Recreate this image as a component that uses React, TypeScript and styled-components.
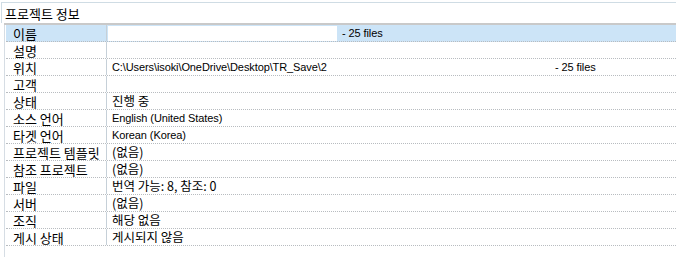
import styled, { createGlobalStyle } from "styled-components";

const GlobalStyle = createGlobalStyle`
  html, body {
    margin: 0;
    padding: 0;
    background: #ffffff;
  }
  body {
    font-family: "Liberation Sans", "Noto Sans CJK KR", sans-serif;
    font-size: 12px;
    color: #000;
  }
`;

type Row = {
  label: string;
  value?: string;
  extra?: string;
  extraAt?: number;
  editing?: boolean;
  latin?: boolean;
};

const rows: Row[] = [
  { label: "이름", extra: "- 25 files", editing: true },
  { label: "설명" },
  {
    label: "위치",
    value: "C:\\Users\\isoki\\OneDrive\\Desktop\\TR_Save\\2",
    extra: "- 25 files",
    extraAt: 448,
    latin: true,
  },
  { label: "고객" },
  { label: "상태", value: "진행 중" },
  { label: "소스 언어", value: "English (United States)", latin: true },
  { label: "타겟 언어", value: "Korean (Korea)", latin: true },
  { label: "프로젝트 템플릿", value: "(없음)" },
  { label: "참조 프로젝트", value: "(없음)" },
  { label: "파일", value: "번역 가능: 8, 참조: 0" },
  { label: "서버", value: "(없음)" },
  { label: "조직", value: "해당 없음" },
  { label: "게시 상태", value: "게시되지 않음" },
];

const Page = styled.div`
  width: 676px;
  height: 257px;
  overflow: hidden;
  display: flex;
  flex-direction: column;
`;

const Header = styled.div`
  height: 20px;
  margin-top: 2px;
  margin-left: 1px;
  border-top: 1px solid #cfdce4;
  border-left: 1px solid #cfdce4;
  padding-left: 3px;
  display: flex;
  align-items: center;
  font-family: "Noto Sans CJK KR", sans-serif;
  font-size: 13px;
  line-height: 1;
`;

const Divider = styled.div`
  height: 2px;
  margin-left: 4px;
  background: #c9c9c9;
`;

const Body = styled.div`
  flex: 1;
  margin-left: 4px;
  border-left: 1px solid #d6dde4;
  padding-left: 1px;
`;

const Grid = styled.div`
  display: flex;
  flex-direction: column;
`;

const RowLine = styled.div<{ $selected?: boolean }>`
  display: grid;
  grid-template-columns: 100px 1px 1fr;
  height: 17px;
  box-sizing: border-box;
  border-bottom: 1px dotted #b8bcc0;
  background: ${(p) => (p.$selected ? "#cce4f7" : "transparent")};
`;

const Label = styled.div`
  padding-left: 7px;
  display: flex;
  align-items: center;
  font-family: "Noto Sans CJK KR", sans-serif;
  font-size: 13px;
  line-height: 1;
  white-space: nowrap;
`;

const ColumnRule = styled.div`
  background: #c6d0d8;
`;

const Value = styled.div<{ $latin?: boolean }>`
  position: relative;
  padding-left: 5px;
  display: flex;
  align-items: center;
  white-space: nowrap;
  font-family: ${(p) =>
    p.$latin
      ? `"Liberation Sans", "Noto Sans CJK KR", sans-serif`
      : `"Noto Sans CJK KR", sans-serif`};
  font-size: ${(p) => (p.$latin ? "11px" : "12.5px")};
  letter-spacing: ${(p) => (p.$latin ? "-0.1px" : "0")};
  line-height: 1;
`;

const EditBox = styled.div`
  width: 229px;
  height: 15px;
  margin-left: -4px;
  margin-right: 5px;
  background: #ffffff;
`;

const Extra = styled.span`
  font-family: "Liberation Sans", sans-serif;
  font-size: 11px;
  letter-spacing: -0.1px;
`;

const Tail = styled(Extra)`
  position: absolute;
  top: 3px;
`;

export default function App() {
  return (
    <Page>
      <GlobalStyle />
      <Header>프로젝트 정보</Header>
      <Divider />
      <Body>
        <Grid>
          {rows.map((r) => (
            <RowLine key={r.label} $selected={r.editing}>
              <Label>{r.label}</Label>
              <ColumnRule />
              <Value $latin={r.latin}>
                {r.editing && <EditBox />}
                {r.value}
                {r.editing && r.extra && <Extra>{r.extra}</Extra>}
                {!r.editing && r.extra && (
                  <Tail style={{ left: r.extraAt }}>{r.extra}</Tail>
                )}
              </Value>
            </RowLine>
          ))}
        </Grid>
      </Body>
    </Page>
  );
}
